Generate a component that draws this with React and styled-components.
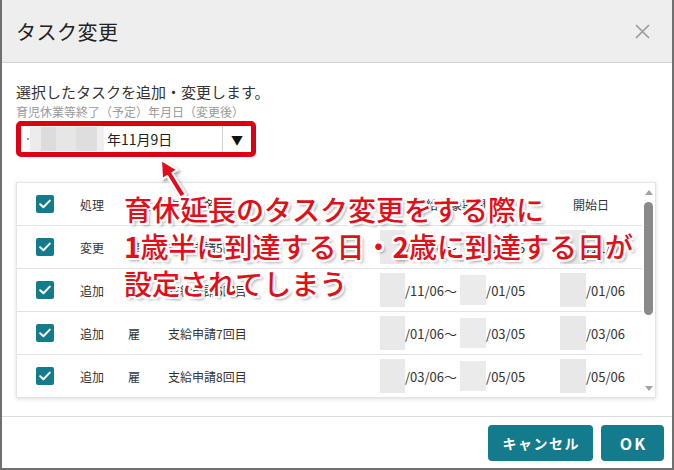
import React from "react";
import styled, { createGlobalStyle } from "styled-components";

const Global = createGlobalStyle`
  html, body { margin: 0; padding: 0; background: #ffffff; }
  body { font-family: "Noto Sans CJK JP", "Noto Sans", sans-serif; color: #333; }
  * { box-sizing: border-box; }
`;

const TEAL = "#137b8c";

const Dialog = styled.div`
  position: relative;
  width: 674px;
  height: 470px;
  border: 2px solid #707070;
  border-top: none;
  display: flex;
  flex-direction: column;
  background: #fff;
`;

const Header = styled.div`
  height: 63px;
  flex: none;
  background: #eeeeee;
  border-bottom: 1px solid #d2d2d2;
  display: flex;
  align-items: center;
  justify-content: space-between;
  padding: 0 22px 0 14px;
`;

const Title = styled.h1`
  margin: 0;
  font-size: 20px;
  font-weight: 400;
  color: #222;
  letter-spacing: 0.5px;
`;

const Close = styled.button`
  border: none;
  background: none;
  padding: 0;
  width: 16px;
  height: 16px;
  display: flex;
  align-items: center;
  justify-content: center;
`;

const Body = styled.div`
  flex: 1;
  padding: 18px 16px 0 14px;
  display: flex;
  flex-direction: column;
`;

const Lead = styled.p`
  margin: 0;
  font-size: 15px;
  line-height: 22px;
  color: #333;
`;

const FieldLabel = styled.div`
  font-size: 12px;
  line-height: 18px;
  color: #9a9a9a;
`;

const Highlight = styled.div`
  width: 240px;
  height: 36px;
  border: 5px solid #dc0012;
  border-radius: 5px;
  display: flex;
`;

const SelectValue = styled.div`
  flex: 1;
  display: flex;
  align-items: center;
  padding-left: 6px;
  font-size: 14px;
  color: #222;
  border-right: 1px solid #cfcfcf;
`;

const Dot = styled.span`
  width: 2px;
  height: 2px;
  background: #999;
  margin-right: 1px;
  flex: none;
`;

const Mosaic = styled.span`
  display: inline-block;
  width: ${(p) => p.$w}px;
  height: ${(p) => p.$h}px;
  background: ${(p) => p.$c};
  flex: none;
`;

const SelectArrow = styled.div`
  width: 28px;
  display: flex;
  align-items: center;
  justify-content: center;
  font-size: 12px;
  color: #111;
`;

const Card = styled.div`
  margin-top: 25px;
  height: 216px;
  border: 1px solid #e4e4e4;
  box-shadow: 0 1px 4px rgba(0, 0, 0, 0.14);
  display: flex;
  overflow: hidden;
`;

const Table = styled.div`
  flex: 1;
  display: flex;
  flex-direction: column;
`;

const Row = styled.div`
  height: ${(p) => (p.$last ? 42 : 43)}px;
  flex: none;
  display: grid;
  grid-template-columns: 63px 48px 40px 212px 180px 1fr;
  align-items: center;
  border-bottom: ${(p) => (p.$last ? "none" : "1px solid #e3e3e3")};
  font-size: 12px;
  color: #333;
`;

const Cell = styled.div`
  display: flex;
  align-items: center;
  white-space: nowrap;
  padding-left: ${(p) => p.$pl || 0}px;
  padding-right: ${(p) => p.$pr || 0}px;
  justify-content: ${(p) => (p.$center ? "center" : "flex-start")};
`;

const DateText = styled.span`
  font-size: 13px;
  color: #333;
`;

const Check = styled.span`
  width: 18px;
  height: 18px;
  border-radius: 2px;
  background: ${TEAL};
  display: inline-flex;
  align-items: center;
  justify-content: center;
`;

const Scrollbar = styled.div`
  width: 13px;
  flex: none;
  display: flex;
  flex-direction: column;
  align-items: center;
  padding: 7px 0 6px;
`;

const ArrowUp = styled.span`
  width: 0;
  height: 0;
  border-left: 4px solid transparent;
  border-right: 4px solid transparent;
  border-bottom: 5px solid #a3a3a3;
`;

const ArrowDown = styled(ArrowUp)`
  border-bottom: none;
  border-top: 5px solid #a3a3a3;
  margin-top: auto;
`;

const Thumb = styled.span`
  margin-top: 7px;
  width: 9px;
  height: 113px;
  border-radius: 5px;
  background: #8a8a8a;
`;

const Footer = styled.div`
  height: 52px;
  flex: none;
  border-top: 1px solid #dcdcdc;
  display: flex;
  justify-content: flex-end;
  align-items: flex-start;
  gap: 8px;
  padding: 8px 8px 0 0;
`;

const Button = styled.button`
  height: 36px;
  width: ${(p) => p.$w}px;
  border: none;
  border-radius: 4px;
  background: ${TEAL};
  color: #fff;
  font-family: "Noto Sans CJK JP", "Noto Sans", sans-serif;
  font-weight: 700;
  font-size: ${(p) => p.$fs || 14}px;
  letter-spacing: ${(p) => p.$ls || 1}px;
  text-indent: ${(p) => p.$ls || 1}px;
  padding: 0;
`;

const Annotation = styled.div`
  position: absolute;
  left: 122px;
  top: 191px;
  font-size: 28px;
  line-height: 37px;
  font-weight: 500;
  color: #e0101b;
  white-space: nowrap;
  pointer-events: none;
  text-shadow:
    2px 0 0 #fff, -2px 0 0 #fff, 0 2px 0 #fff, 0 -2px 0 #fff,
    2px 2px 0 #fff, -2px -2px 0 #fff, 2px -2px 0 #fff, -2px 2px 0 #fff,
    3px 3px 3px rgba(0, 0, 0, 0.35);
`;

const Num = styled.span`
  font-weight: 700;
`;

const Pointer = styled.svg`
  position: absolute;
  left: 0;
  top: 0;
  pointer-events: none;
`;

const CheckIcon = () => (
  <svg width="12" height="10" viewBox="0 0 12 10">
    <path d="M1.2 5.2 L4.4 8.2 L10.8 1.6" fill="none" stroke="#fff" strokeWidth="2" strokeLinecap="round" strokeLinejoin="round" />
  </svg>
);

const rows = [
  { op: "変更", kind: "雇", name: "支給申請5回目", a: "/09/06～", b: "/11/05", c: "/11/06" },
  { op: "追加", kind: "雇", name: "支給申請6回目", a: "/11/06～", b: "/01/05", c: "/01/06" },
  { op: "追加", kind: "雇", name: "支給申請7回目", a: "/01/06～", b: "/03/05", c: "/03/06" },
  { op: "追加", kind: "雇", name: "支給申請8回目", a: "/03/06～", b: "/05/05", c: "/05/06" },
];

export default function App() {
  return (
    <>
      <Global />
      <Dialog>
        <Header>
          <Title>タスク変更</Title>
          <Close aria-label="close">
            <svg width="15" height="15" viewBox="0 0 15 15">
              <path d="M1 1 L14 14 M14 1 L1 14" stroke="#9a9a9a" strokeWidth="1.6" />
            </svg>
          </Close>
        </Header>
        <Body>
          <Lead>選択したタスクを追加・変更します。</Lead>
          <FieldLabel>育児休業等終了（予定）年月日（変更後）</FieldLabel>
          <Highlight>
            <SelectValue>
              <Dot />
              <Mosaic $w={11} $h={24} $c="#ececec" />
              <Mosaic $w={15} $h={24} $c="#dcdcdc" />
              <Mosaic $w={20} $h={24} $c="#e6e6e6" />
              <Mosaic $w={21} $h={24} $c="#dedede" />
              <Mosaic $w={7} $h={24} $c="#efefef" />
              <span style={{ marginLeft: 3 }}>年11月9日</span>
            </SelectValue>
            <SelectArrow>▼</SelectArrow>
          </Highlight>
          <Card>
            <Table>
              <Row>
                <Cell $pl={19}><Check><CheckIcon /></Check></Cell>
                <Cell>処理</Cell>
                <Cell>種別</Cell>
                <Cell>タスク名</Cell>
                <Cell $pr={40} $center>支給対象期間</Cell>
                <Cell $pl={13}>開始日</Cell>
              </Row>
              {rows.map((r, i) => (
                <Row key={i} $last={i === rows.length - 1}>
                  <Cell $pl={19}><Check><CheckIcon /></Check></Cell>
                  <Cell>{r.op}</Cell>
                  <Cell>{r.kind}</Cell>
                  <Cell>{r.name}</Cell>
                  <Cell>
                    <Mosaic $w={25} $h={34} $c="#e9e9e9" />
                    <DateText>{r.a}</DateText>
                    <Mosaic $w={26} $h={30} $c="#ebebeb" style={{ marginLeft: 3 }} />
                    <DateText>{r.b}</DateText>
                  </Cell>
                  <Cell>
                    <Mosaic $w={26} $h={34} $c="#e8e8e8" />
                    <DateText>{r.c}</DateText>
                  </Cell>
                </Row>
              ))}
            </Table>
            <Scrollbar>
              <ArrowUp />
              <Thumb />
              <ArrowDown />
            </Scrollbar>
          </Card>
        </Body>
        <Footer>
          <Button $w={105} $ls={1.5}>キャンセル</Button>
          <Button $w={63} $fs={16} $ls={2}>OK</Button>
        </Footer>
        <Pointer width="674" height="470" viewBox="0 0 674 470">
          <defs>
            <filter id="sh" x="-50%" y="-50%" width="200%" height="200%">
              <feDropShadow dx="2" dy="2" stdDeviation="1.5" floodColor="#000" floodOpacity="0.35" />
            </filter>
          </defs>
          <polygon
            points="159,160 175.5,169.8 170.4,172.9 183.6,194.4 178.4,197.6 165.2,176.1 160.1,179.2"
            fill="#e0101b"
            stroke="#fff"
            strokeWidth="2"
            strokeLinejoin="round"
            filter="url(#sh)"
          />
        </Pointer>
        <Annotation>
          育休延長のタスク変更をする際に
          <br />
          <Num>1</Num>歳半に到達する日・<Num>2</Num>歳に到達する日が
          <br />
          設定されてしまう
        </Annotation>
      </Dialog>
    </>
  );
}
